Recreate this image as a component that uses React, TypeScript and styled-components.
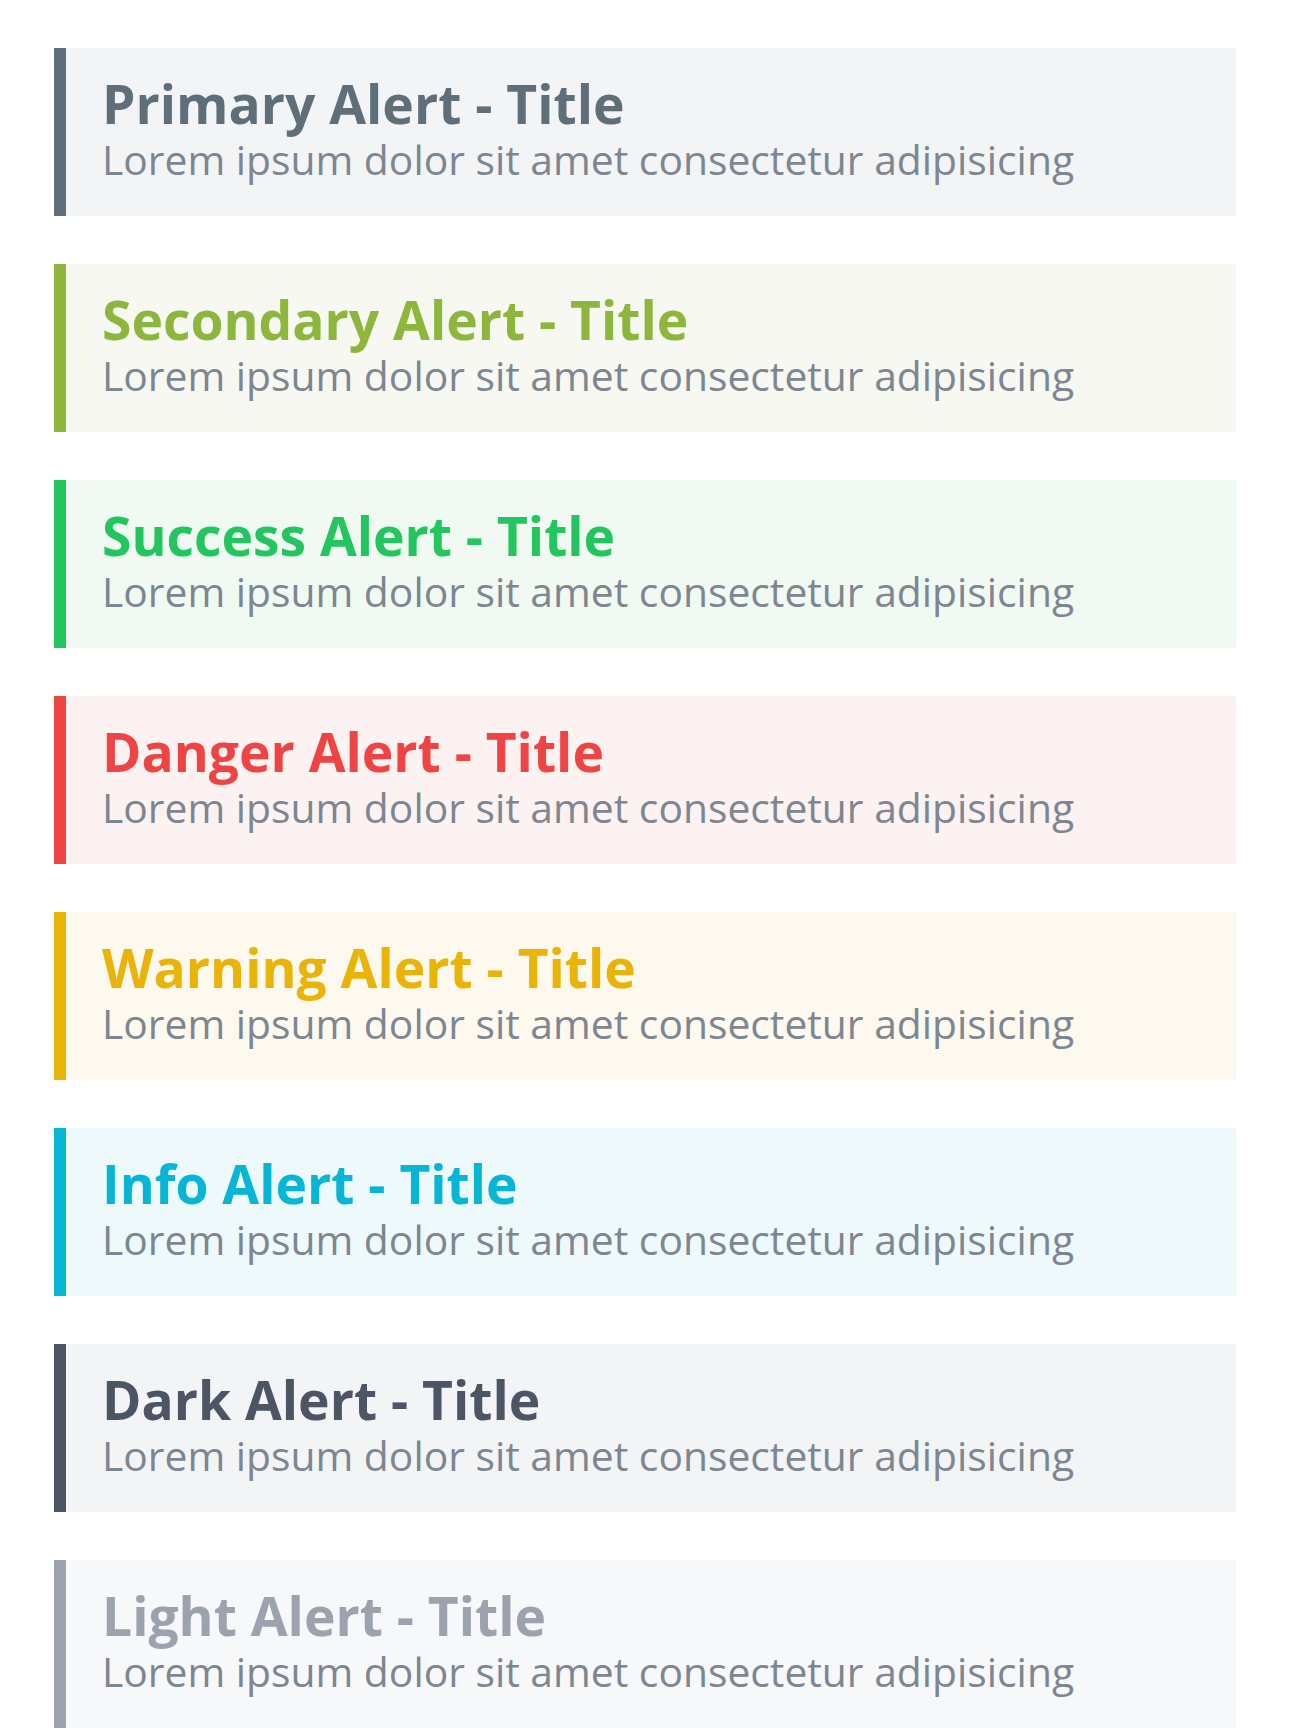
import styled, { createGlobalStyle } from "styled-components";

interface Variant {
    name: string;
    accent: string;
    tint: string;
}

const variants: Variant[] = [
    { name: "Primary", accent: "#5f6f7a", tint: "#f3f4f6" },
    { name: "Secondary", accent: "#8db63c", tint: "#f7f8f1" },
    { name: "Success", accent: "#22c55e", tint: "#f0faf3" },
    { name: "Danger", accent: "#ef4444", tint: "#fcf2f2" },
    { name: "Warning", accent: "#eab308", tint: "#fef9ee" },
    { name: "Info", accent: "#06b6d4", tint: "#eef9fb" },
    { name: "Dark", accent: "#4b5563", tint: "#f3f4f6" },
    { name: "Light", accent: "#9ca3af", tint: "#f7f8fa" },
];

const GlobalStyle = createGlobalStyle`
    html, body {
        margin: 0;
        padding: 0;
        background: #ffffff;
    }
    body {
        font-family: "Open Sans", "Noto Sans", sans-serif;
    }
`;

function Alert(props: Variant) {
    return (
        <AlertBox accent={props.accent} tint={props.tint}>
            <AlertTitle accent={props.accent}>{props.name} Alert - Title</AlertTitle>
            <AlertText>Lorem ipsum dolor sit amet consectetur adipisicing</AlertText>
        </AlertBox>
    );
}

function App() {
    return (
        <>
            <GlobalStyle />
            <Page>
                {variants.map((v) => (
                    <Alert key={v.name} {...v} />
                ))}
            </Page>
        </>
    );
}

const Page = styled.div`
    display: flex;
    flex-direction: column;
    gap: 48px;
    padding: 48px 54px 0;
`;

interface IAlertBox {
    accent: string;
    tint: string;
}

const AlertBox = styled.div<IAlertBox>`
    display: flex;
    flex-direction: column;
    height: 168px;
    box-sizing: border-box;
    padding: 26px 36px 0;
    background: ${(p) => p.tint};
    border-left: 12px solid ${(p) => p.accent};
`;

const AlertTitle = styled.div<{ accent: string }>`
    font-size: 53.4px;
    line-height: 60px;
    font-weight: 700;
    color: ${(p) => p.accent};
    white-space: nowrap;
`;

const AlertText = styled.div`
    font-size: 40.8px;
    line-height: 50px;
    font-weight: 400;
    color: #7d8691;
    white-space: nowrap;
`;

export default App;
